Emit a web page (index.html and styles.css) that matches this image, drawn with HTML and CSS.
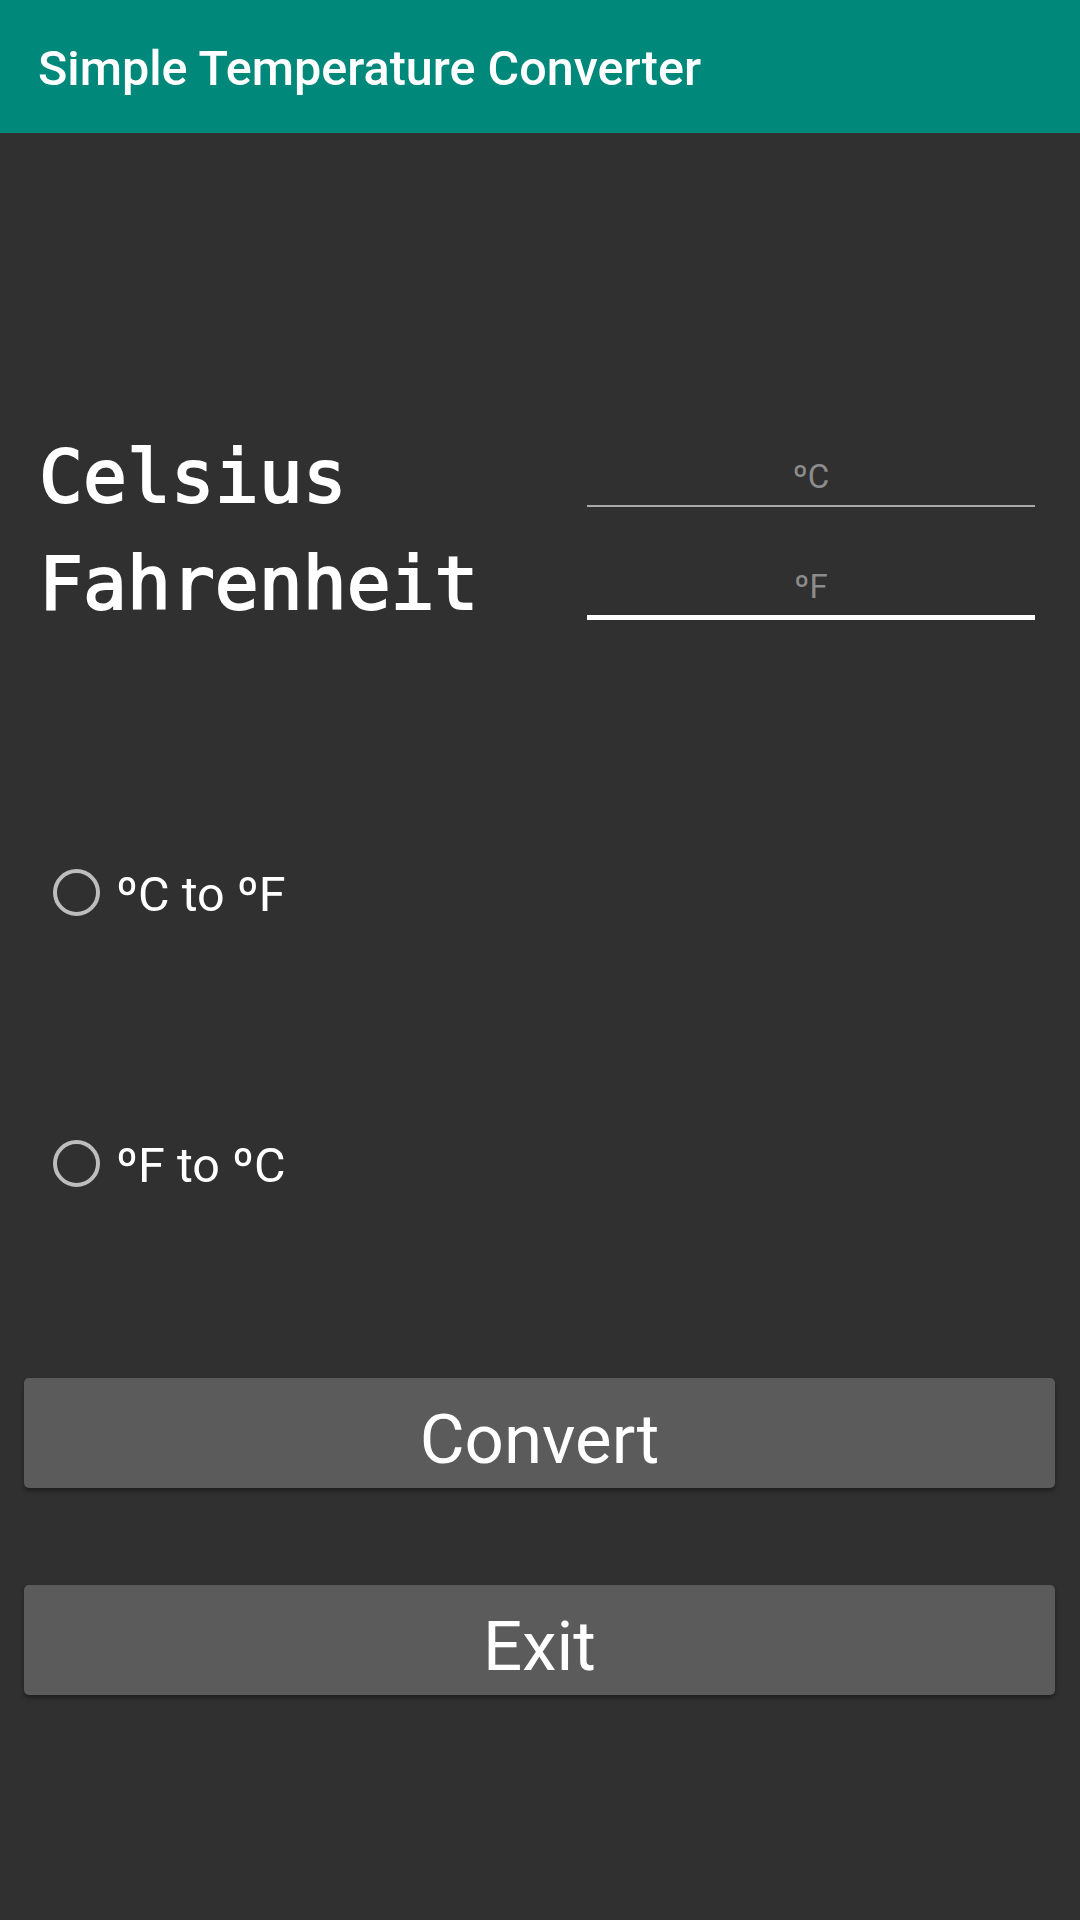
FILE: index.html
```html
<!DOCTYPE html>
<html lang="en">
<head>
<meta charset="utf-8">
<title>Simple Temperature Converter</title>
<link rel="stylesheet" href="styles.css">
</head>
<body>
  <header class="app-bar">
    <h1 class="app-title">Simple Temperature Converter</h1>
  </header>
  <main class="content">
    <section class="fields">
      <div class="field-row row-c">
        <label class="field-label" for="celsius">Celsius</label>
        <input class="field-input" id="celsius" type="text" placeholder="ºC">
      </div>
      <div class="field-row row-f">
        <label class="field-label" for="fahrenheit">Fahrenheit</label>
        <input class="field-input focused" id="fahrenheit" type="text" placeholder="ºF">
      </div>
    </section>
    <section class="radios">
      <label class="radio-row first">
        <span class="radio-circle"></span>
        <span class="radio-text">ºC to ºF</span>
      </label>
      <label class="radio-row second">
        <span class="radio-circle"></span>
        <span class="radio-text">ºF to ºC</span>
      </label>
    </section>
    <section class="buttons">
      <button class="btn btn-convert" type="button">Convert</button>
      <button class="btn btn-exit" type="button">Exit</button>
    </section>
  </main>
</body>
</html>
```
FILE: styles.css
```css
* {
  box-sizing: border-box;
}

html, body {
  margin: 0;
  padding: 0;
}

body {
  width: 1080px;
  height: 1920px;
  background: #303030;
  color: #ffffff;
  font-family: Roboto, "Noto Sans", sans-serif;
  overflow: hidden;
}

.app-bar {
  height: 133px;
  background: #00897b;
  display: flex;
  align-items: center;
  padding: 4px 0 0 38px;
}

.app-title {
  margin: 0;
  font-family: Roboto, sans-serif;
  font-weight: 500;
  font-size: 48.5px;
  color: #ffffff;
  letter-spacing: 0;
}

.content {
  display: flex;
  flex-direction: column;
}

.fields {
  margin-top: 302px;
  padding: 0 45px 0 39px;
  display: flex;
  flex-direction: column;
}

.field-row {
  display: grid;
  grid-template-columns: 1fr 448px;
  align-items: start;
}

.row-c {
  height: 107px;
}

.field-label {
  font-family: "DejaVu Sans Mono", "Liberation Mono", monospace;
  font-weight: normal;
  font-size: 73px;
  line-height: 84px;
  color: #ffffff;
  -webkit-text-stroke: 2px #ffffff;
}

.field-input {
  display: block;
  width: 448px;
  height: 72px;
  margin: 0;
  padding: 12px 0 0 0;
  border: none;
  border-bottom: 2px solid #a9a9a9;
  background: transparent;
  color: #ffffff;
  font-family: Roboto, sans-serif;
  font-size: 33px;
  text-align: center;
  outline: none;
}

.field-input.focused {
  height: 78px;
  padding-top: 15px;
  border-bottom: 5px solid #ffffff;
}

.field-input::placeholder {
  color: #8c8c8c;
  opacity: 1;
}

.radios {
  display: flex;
  flex-direction: column;
  padding-left: 53px;
}

.radio-row {
  display: flex;
  align-items: center;
  height: 60px;
  gap: 16px;
}

.radio-row.first {
  margin-top: 236px;
}

.radio-row.second {
  margin-top: 211px;
}

.radio-circle {
  width: 47px;
  height: 47px;
  border-radius: 50%;
  border: 4px solid #bdbdbd;
  flex: none;
}

.radio-text {
  font-family: Roboto, sans-serif;
  font-size: 48.5px;
  color: #ffffff;
  padding-top: 5px;
}

.buttons {
  display: flex;
  flex-direction: column;
  padding: 0 25px 0 24px;
  margin-top: 185px;
  gap: 97px;
}

.btn {
  display: block;
  width: 100%;
  height: 110px;
  margin: 0;
  padding: 12px 0 0 0;
  border: none;
  border-radius: 5px;
  background: #5b5b5c;
  color: #ffffff;
  font-family: Roboto, sans-serif;
  font-size: 69px;
  box-shadow: 0 3px 4px rgba(0, 0, 0, 0.35);
}
```
